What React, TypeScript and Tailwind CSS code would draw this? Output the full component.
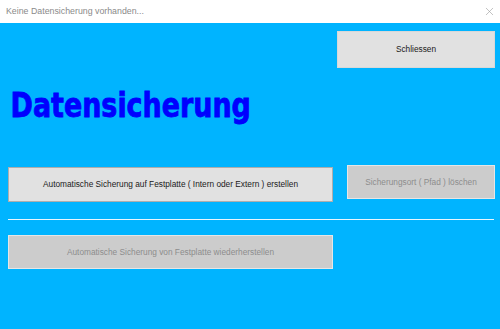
import { X } from "lucide-react";

const ui = { fontFamily: '"Liberation Sans", Arial, sans-serif' };

const App = () => {
  return (
    <div className="w-[500px] h-[329px] flex flex-col overflow-hidden" style={ui}>
      {/* Title bar */}
      <div className="h-[23px] bg-white flex items-center justify-between pl-[6px] pr-[4px] shrink-0">
        <span className="text-[8.8px] text-[#8a8a8a]">Keine Datensicherung vorhanden...</span>
        <X size={13} strokeWidth={1.1} className="text-[#9a9a9a]" />
      </div>

      {/* Body */}
      <div className="flex-1 bg-[#00b4ff] flex flex-col">
        <div className="flex justify-end pt-[8px] pr-[5px]">
          <button className="w-[158px] h-[37px] bg-[#e1e1e1] border border-[#d8d8d8] text-[8.3px] text-[#202020]">
            Schliessen
          </button>
        </div>

        <h1
          className="mt-[19px] pl-[12px] h-[36px] leading-[36px] text-[34px] font-bold text-[#0000ff] whitespace-nowrap origin-left scale-x-[0.88] [-webkit-text-stroke:0.8px_#0000ff]"
          style={{ fontFamily: '"DejaVu Sans Condensed", "DejaVu Sans", sans-serif' }}
        >
          Datensicherung
        </h1>

        <div className="flex items-start mt-[42px] pl-[8px]">
          <button className="mt-[2px] w-[325px] h-[35px] bg-[#e1e1e1] border border-[#adadad] text-[8.3px] text-[#1a1a1a] whitespace-nowrap">
            Automatische Sicherung auf Festplatte ( Intern oder Extern ) erstellen
          </button>
          <button className="ml-[14px] w-[148px] h-[34px] bg-[#cccccc] border border-[#e6e6e6] text-[8.3px] text-[#8d8d8d] whitespace-nowrap">
            Sicherungsort ( Pfad ) löschen
          </button>
        </div>

        <div className="mt-[17px] ml-[8px] mr-[6px] h-px bg-[#e8f6ff]" />

        <div className="mt-[15px] pl-[8px]">
          <button className="w-[325px] h-[34px] bg-[#cccccc] border border-[#e6e6e6] text-[8.3px] text-[#8d8d8d] whitespace-nowrap">
            Automatische Sicherung von Festplatte wiederherstellen
          </button>
        </div>
      </div>
    </div>
  );
};

export default App;
